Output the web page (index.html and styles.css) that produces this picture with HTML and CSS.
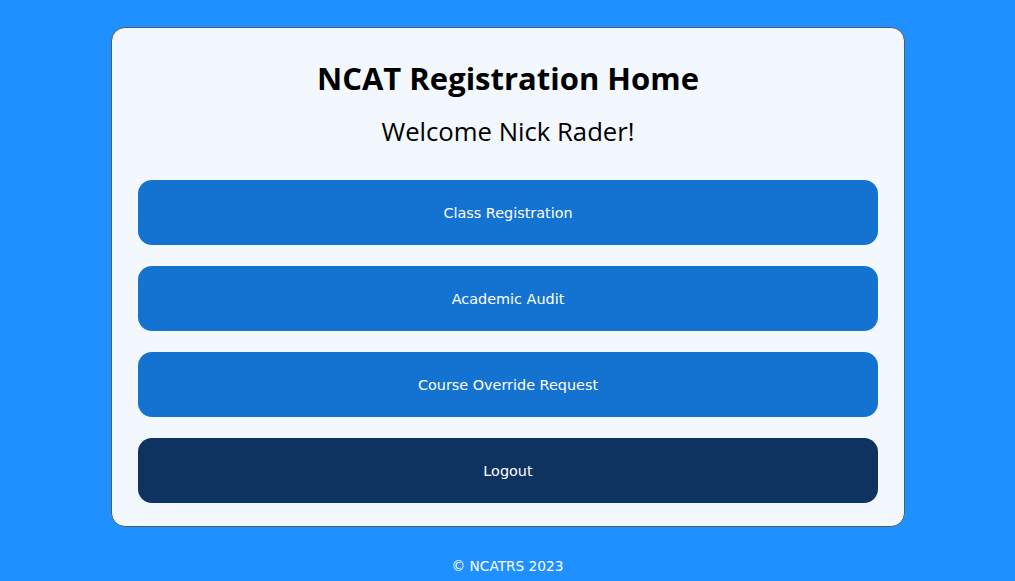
FILE: index.html
```html
<!DOCTYPE html>
<html>
<head>
<meta charset="utf-8">
<link rel="stylesheet" href="styles.css">
</head>
<body>
<main class="card">
  <h1 class="title">NCAT Registration Home</h1>
  <h2 class="welcome">Welcome Nick Rader!</h2>
  <div class="actions">
    <button class="btn">Class Registration</button>
    <button class="btn">Academic Audit</button>
    <button class="btn">Course Override Request</button>
    <button class="btn btn-dark">Logout</button>
  </div>
</main>
<footer class="footer">© NCATRS 2023</footer>
</body>
</html>
```
FILE: styles.css
```css
html, body {
  margin: 0;
  padding: 0;
}
body {
  background: #1e90ff;
  font-family: "DejaVu Sans", Verdana, sans-serif;
  padding-top: 27px;
}
.card {
  box-sizing: border-box;
  width: 794px;
  margin: 0 auto 0 111px;
  background: #f2f8fe;
  border: 1px solid #4f5b66;
  border-radius: 14px;
  padding: 29px 26px 23px 26px;
}
.title {
  margin: 0;
  text-align: center;
  font-family: "Open Sans", "Noto Sans", sans-serif;
  font-weight: 700;
  font-size: 31px;
  line-height: 42px;
  color: #000;
}
.welcome {
  margin: 16px 0 0;
  text-align: center;
  font-family: "Open Sans", "Noto Sans", sans-serif;
  font-weight: 400;
  font-size: 25.7px;
  line-height: 34px;
  color: #000;
}
.actions {
  margin-top: 31px;
  display: flex;
  flex-direction: column;
  gap: 21px;
}
.btn {
  height: 65px;
  border: none;
  border-radius: 14px;
  background: #1473d1;
  color: #fff;
  font-family: "DejaVu Sans", Verdana, sans-serif;
  font-size: 14.4px;
  cursor: pointer;
}
.btn-dark {
  background: #0f3361;
}
.footer {
  text-align: center;
  color: #fff;
  font-size: 13.7px;
  margin-top: 31px;
}
```
